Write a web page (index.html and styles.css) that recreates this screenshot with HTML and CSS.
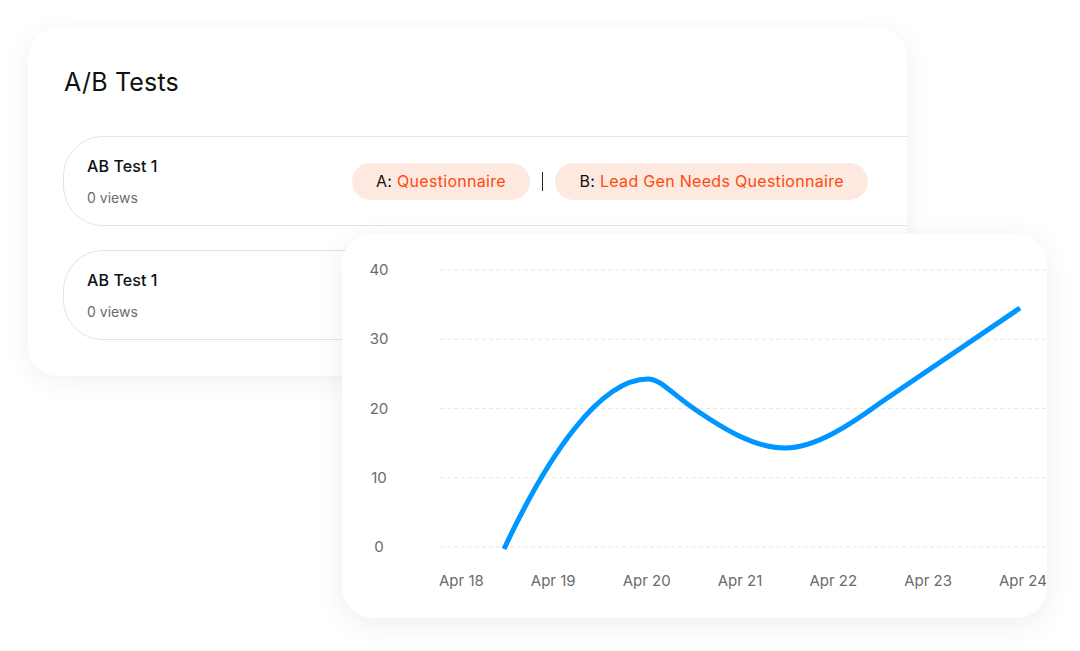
FILE: index.html
```html
<!DOCTYPE html>
<html lang="en">
<head>
<meta charset="utf-8">
<title>A/B Tests</title>
<link rel="stylesheet" href="styles.css">
</head>
<body>
<div class="stage">
  <section class="tests-card">
    <h1 class="tests-title">A/B Tests</h1>
    <div class="test-list">
      <div class="test-row">
        <div class="test-info">
          <div class="test-name">AB Test 1</div>
          <div class="test-views">0 views</div>
        </div>
        <div class="variants">
          <span class="pill"><span class="pill-key">A:</span> Questionnaire</span>
          <span class="sep"></span>
          <span class="pill"><span class="pill-key">B:</span> Lead Gen Needs Questionnaire</span>
        </div>
      </div>
      <div class="test-row">
        <div class="test-info">
          <div class="test-name">AB Test 1</div>
          <div class="test-views">0 views</div>
        </div>
        <div class="variants">
          <span class="pill"><span class="pill-key">A:</span> Questionnaire</span>
          <span class="sep"></span>
          <span class="pill"><span class="pill-key">B:</span> Lead Gen Needs Questionnaire</span>
        </div>
      </div>
    </div>
  </section>

  <section class="chart-card">
    <div class="y-axis">
      <span>40</span>
      <span>30</span>
      <span>20</span>
      <span>10</span>
      <span>0</span>
    </div>
    <svg class="plot" width="607" height="297" viewBox="0 0 607 297">
      <g class="grid">
        <line x1="0" y1="10" x2="607" y2="10"/>
        <line x1="0" y1="79.2" x2="607" y2="79.2"/>
        <line x1="0" y1="148.4" x2="607" y2="148.4"/>
        <line x1="0" y1="217.6" x2="607" y2="217.6"/>
        <line x1="0" y1="286.8" x2="607" y2="286.8"/>
      </g>
      <path class="series" d="M64 289 C108 195 160 119 208 119 C220 119 230 132 253 148 C285 170 315 188 345 188 C375 188 410 165 440 143 L580 48"/>
    </svg>
    <div class="x-axis">
      <span>Apr 18</span>
      <span>Apr 19</span>
      <span>Apr 20</span>
      <span>Apr 21</span>
      <span>Apr 22</span>
      <span>Apr 23</span>
      <span>Apr 24</span>
    </div>
  </section>
</div>
</body>
</html>
```

FILE: styles.css
```css
* {
  box-sizing: border-box;
}

html, body {
  margin: 0;
  padding: 0;
  background: #ffffff;
}

body {
  font-family: Inter, "Noto Sans", "Liberation Sans", sans-serif;
  color: #111111;
  width: 1080px;
  height: 651px;
  overflow: hidden;
}

.stage {
  position: relative;
  width: 1080px;
  height: 651px;
  padding: 28px;
}

.tests-card {
  width: 879px;
  height: 348px;
  background: #ffffff;
  border-radius: 30px;
  box-shadow: 0 4px 28px rgba(0, 0, 0, 0.06);
  padding: 38px 0 0 35px;
  overflow: hidden;
}

.tests-title {
  margin: 0;
  font-size: 25px;
  line-height: 32px;
  font-weight: 400;
  letter-spacing: 0.2px;
  color: #111111;
  padding-left: 1px;
}

.test-list {
  margin-top: 38px;
  width: 940px;
  display: flex;
  flex-direction: column;
  gap: 24px;
}

.test-row {
  height: 90px;
  border: 1px solid #e3e3e3;
  border-radius: 40px;
  display: flex;
  align-items: center;
  padding-left: 23px;
}

.test-info {
  width: 265px;
  display: flex;
  flex-direction: column;
  gap: 12px;
  padding-top: 2px;
}

.test-name {
  font-size: 16px;
  line-height: 20px;
  font-weight: 500;
  letter-spacing: 0.1px;
  color: #111111;
}

.test-views {
  font-size: 14px;
  line-height: 20px;
  color: #6b6b6b;
}

.variants {
  display: flex;
  align-items: center;
  gap: 12px;
}

.pill {
  display: inline-flex;
  align-items: center;
  height: 37px;
  padding: 0 24px;
  border-radius: 19px;
  background: #fde9df;
  color: #ff4a0c;
  font-size: 16px;
  letter-spacing: 0.3px;
  white-space: pre;
}

.pill-key {
  color: #111111;
}

.sep {
  width: 1.5px;
  height: 19px;
  background: #222222;
}

.chart-card {
  position: absolute;
  left: 342px;
  top: 234px;
  width: 705px;
  height: 384px;
  background: #ffffff;
  border-radius: 30px;
  box-shadow: 0 6px 30px rgba(0, 0, 0, 0.07);
  padding-top: 26px;
  display: grid;
  grid-template-columns: 74px 607px;
  grid-template-rows: 297px 20px;
  column-gap: 24px;
  row-gap: 14px;
  overflow: hidden;
}

.y-axis {
  display: flex;
  flex-direction: column;
  justify-content: space-between;
  align-items: center;
  font-size: 15px;
  line-height: 20px;
  color: #6b6b6b;
}

.plot {
  display: block;
}

.grid line {
  stroke: #e6e6e6;
  stroke-width: 1;
  stroke-dasharray: 4 3;
}

.series {
  fill: none;
  stroke: #0096ff;
  stroke-width: 5;
  stroke-linecap: butt;
  stroke-linejoin: round;
}

.x-axis {
  grid-column: 2;
  display: flex;
  justify-content: space-between;
  font-size: 15px;
  line-height: 20px;
  color: #6b6b6b;
  margin-left: -1px;
}
```
